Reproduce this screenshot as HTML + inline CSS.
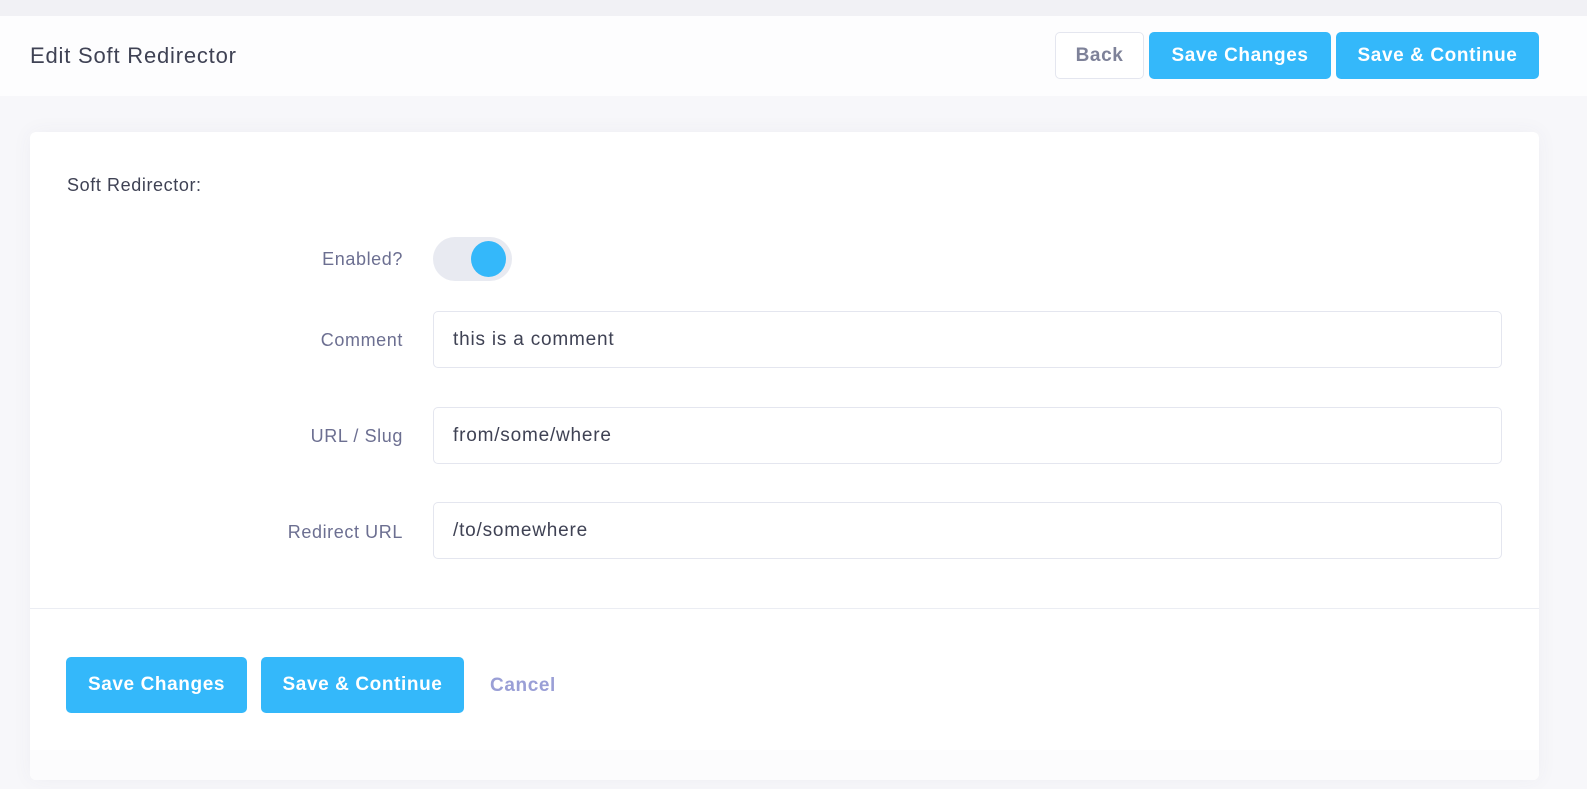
<!DOCTYPE html>
<html><head><meta charset="utf-8"><style>
*{box-sizing:border-box;margin:0;padding:0}
body{width:1587px;height:789px;background:#f7f7fa;font-family:"Liberation Sans",sans-serif;position:relative;overflow:hidden;letter-spacing:0.6px}
.top{position:absolute;left:0;top:0;width:1587px;height:16px;background:#f1f1f5}
.hdr{position:absolute;left:0;top:16px;width:1587px;height:80px;background:#fdfdfe}
.title{position:absolute;left:30px;top:43px;font-size:22px;color:#3f4254;letter-spacing:0.8px}
.btn{position:absolute;border-radius:5px;background:#34b8fa;color:#fff;font-weight:bold;font-size:19px;display:flex;align-items:center;justify-content:center}
.back{background:#fff;border:1px solid #e4e6ef;color:#7e8299}
.card{position:absolute;left:30px;top:132px;width:1509px;height:648px;background:#fff;border-radius:6px;box-shadow:0 0 20px rgba(80,80,120,.05)}
.foot{position:absolute;left:30px;top:750px;width:1509px;height:30px;background:#fcfcfd;border-radius:0 0 6px 6px}
.sec{position:absolute;left:67px;top:175px;font-size:18px;color:#3f4254}
.lbl{position:absolute;right:1184px;font-size:18px;color:#6c6f91;text-align:right}
.inp{position:absolute;left:433px;width:1069px;height:57px;border:1px solid #e4e6ef;border-radius:5px;font-size:19px;color:#3f4254;padding:17px 19px;letter-spacing:0.8px}
.tog{position:absolute;left:433px;top:237px;width:79px;height:44px;border-radius:22px;background:#e8eaf1}
.knob{position:absolute;left:38px;top:4px;width:35px;height:36px;border-radius:50%;background:#34b8fa}
.div{position:absolute;left:30px;top:608px;width:1509px;height:1px;background:#ebedf3}
</style></head><body>
<div class="top"></div>
<div class="hdr"></div>
<div class="title">Edit Soft Redirector</div>
<div class="btn back" style="left:1055px;top:32px;width:89px;height:47px">Back</div>
<div class="btn" style="left:1149px;top:32px;width:182px;height:47px">Save Changes</div>
<div class="btn" style="left:1336px;top:32px;width:203px;height:47px">Save &amp; Continue</div>
<div class="card"></div>
<div class="foot"></div>
<div class="sec">Soft Redirector:</div>
<div class="lbl" style="top:249px">Enabled?</div>
<div class="tog"><div class="knob"></div></div>
<div class="lbl" style="top:330px">Comment</div>
<div class="inp" style="top:311px">this is a comment</div>
<div class="lbl" style="top:426px">URL / Slug</div>
<div class="inp" style="top:407px">from/some/where</div>
<div class="lbl" style="top:522px">Redirect URL</div>
<div class="inp" style="top:502px">/to/somewhere</div>
<div class="div"></div>
<div class="btn" style="left:66px;top:657px;width:181px;height:56px">Save Changes</div>
<div class="btn" style="left:261px;top:657px;width:203px;height:56px">Save &amp; Continue</div>
<div style="position:absolute;left:490px;top:675px;font-size:19px;font-weight:bold;color:#9a9fd6">Cancel</div>
</body></html>
